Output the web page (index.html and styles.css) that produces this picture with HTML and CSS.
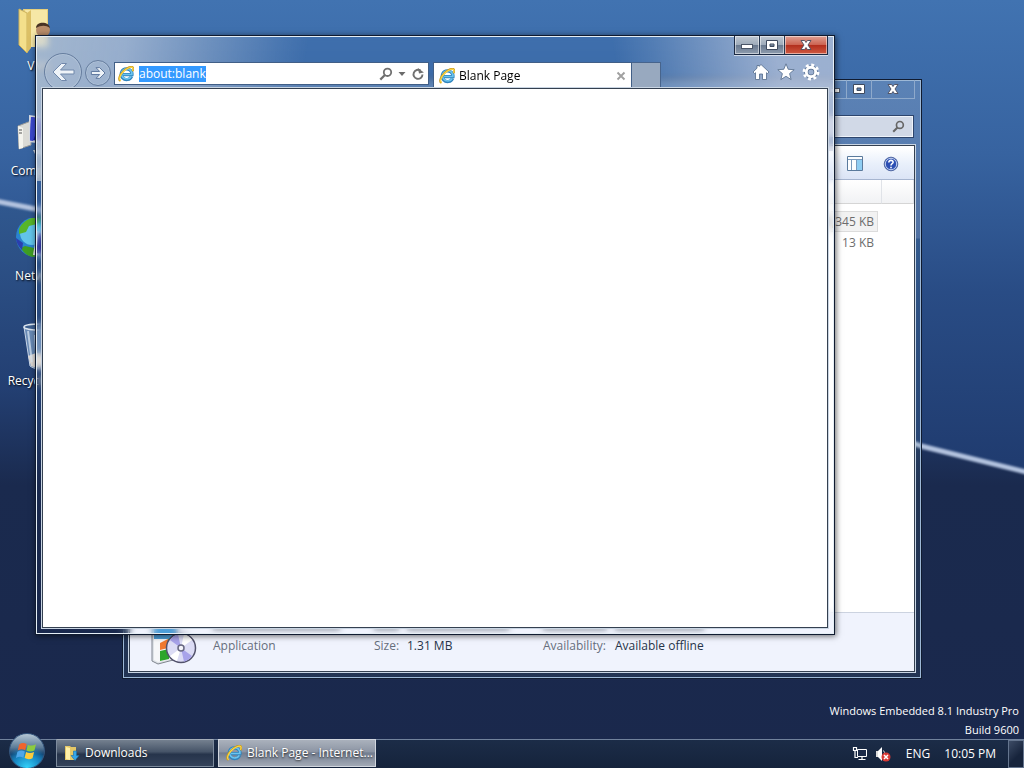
FILE: index.html
```html
<!DOCTYPE html>
<html lang="en">
<head>
<meta charset="utf-8">
<title>Desktop</title>
<link rel="stylesheet" href="styles.css">
</head>
<body>
<svg class="symbols" aria-hidden="true">
  <symbol id="ie" viewBox="0 0 16 16">
    <path d="M13.6 10.3A5.4 5.4 0 1 1 14 8.7H4.6" fill="none" stroke="#2f83bd" stroke-width="3.2"/>
    <path d="M13.3 10.3A5.2 5.2 0 1 1 13.9 8.5H5" fill="none" stroke="#6cc4ee" stroke-width="1.7"/>
    <path d="M2.4 14.9C-.2 13.800 1.500 9 5.300 5.200 9 1.500 13.800-.4 15 1.500c.7 1.100.1 2.600-.6 3.700" fill="none" stroke="#c99a1c" stroke-width="1.900"/>
    <path d="M2.800 14.800C.4 13.800 1.800 9.200 5.500 5.500 9.100 1.900 13.500.2 14.700 1.700c.6.900.3 2.100-.3 3.100" fill="none" stroke="#fad648" stroke-width="1.200"/>
  </symbol>
  <symbol id="flag" viewBox="0 0 20 20">
    <path d="M3.500 4.500C5.500 3 7.500 3 9.700 4.200L8.500 9.300C6.500 8.300 4.600 8.300 2.300 9.500z" fill="#f0642d"/>
    <path d="M10.700 4.700c2.200 1.200 4.400 1 6.800-.3l-1.300 5.200c-2.300 1.200-4.500 1.200-6.700 0z" fill="#8ccb3f"/>
    <path d="M2 10.600c2.200-1.200 4.200-1.200 6.200-.1L7 15.600c-2.200-1.200-4-1-6.200.2z" fill="#4da6e8"/>
    <path d="M9.200 10.900c2.300 1.200 4.500 1 6.700-.1l-1.300 5.200c-2.200 1.200-4.400 1.100-6.600-.1z" fill="#fccb3b"/>
  </symbol>
  <symbol id="lens" viewBox="0 0 14 14">
    <circle cx="8.500" cy="5.300" r="3.700" fill="none" stroke="currentColor" stroke-width="1.800"/>
    <path d="M5.900 8 1.300 12.600" stroke="currentColor" stroke-width="2.200"/>
  </symbol>
  <symbol id="min" viewBox="0 0 14 12"><rect x="1.500" y="5.500" width="11" height="4" fill="#fff" stroke="#4b5668"/></symbol>
  <symbol id="max" viewBox="0 0 14 12"><path d="M1.500 1.500h11v9h-11zM5 5v2.500h4V5z" fill="#fff" fill-rule="evenodd" stroke="#3f4a5e"/></symbol>
  <symbol id="close" viewBox="0 0 14 12"><path d="M2 1.500h3.600L7 3.500l1.400-2H12L9 6l3 4.500H8.400L7 8.500l-1.400 2H2L5 6z" fill="#fff" stroke="#4b4c5c" stroke-width=".9"/></symbol>
</svg>

<div class="screen">
  <svg class="wallpaper" viewBox="0 0 1024 768" preserveAspectRatio="none" aria-hidden="true">
    <defs>
      <linearGradient id="sky" x1="0" y1="0" x2="0" y2="1">
        <stop offset="0" stop-color="#4173b1"/><stop offset=".2" stop-color="#3763a0"/>
        <stop offset=".38" stop-color="#294c85"/><stop offset=".6" stop-color="#203c70"/><stop offset="1" stop-color="#1a284c"/>
      </linearGradient>
      <linearGradient id="ground" x1="0" y1="0" x2="0" y2="1">
        <stop offset="0" stop-color="#30588f"/><stop offset=".33" stop-color="#233f72"/>
        <stop offset=".5" stop-color="#1a2a4e"/><stop offset="1" stop-color="#1a284c"/>
      </linearGradient>
      <filter id="soft"><feGaussianBlur stdDeviation="1"/></filter>
    </defs>
    <rect width="1024" height="768" fill="url(#sky)"/>
    <path d="M0 202Q560 310 921 446L1024 472V768H0z" fill="url(#ground)"/>
    <path d="M-5 201Q560 310 921 446L1030 473" fill="none" stroke="#b3c3df" stroke-width="5" filter="url(#soft)"/>
  </svg>

  <main class="desktop">
    <nav class="shortcuts" aria-label="Desktop icons">
      <a class="shortcut" href="#user">
        <svg viewBox="0 0 48 48" aria-hidden="true">
          <path d="M8 1h25v38H12z" fill="#e6cf7c"/><path d="M10 2h22v37H14z" fill="#f6e7a6"/>
          <path d="M4 1l8 4v40L4 37z" fill="#f4df8b" stroke="#cdb25b"/><path d="M12 5l4-3v38l-4 5z" fill="#dcc066"/>
          <circle cx="28" cy="22" r="7" fill="#b98d6a"/><path d="M21 20c0-7 13-7 14 0-4-3-9-3-14 0z" fill="#493324"/>
        </svg><span>VMs</span></a>
      <a class="shortcut" href="#computer">
        <svg viewBox="0 0 48 48" aria-hidden="true">
          <path d="M3 13l13-5v24L4 36z" fill="#dbdbd6" stroke="#9b9b98"/><path d="M3 13l5 2v20l-4 1z" fill="#f4f4ee"/><path d="M4 17h3M4 20h3" stroke="#555"/>
          <path d="M14 2l29 4v27l-29-4z" fill="#d6dbe4"/><path d="M16 4l25 4v21L15 27z" fill="#1519a3"/><path d="M16 4l10 2-8 22-3-.5z" fill="#3b49d0"/>
          <path d="M18 37h16l4 4H20z" fill="#ccd2dc"/>
        </svg><span>Computer</span></a>
      <a class="shortcut" href="#network">
        <svg viewBox="0 0 48 48" aria-hidden="true">
          <circle cx="21" cy="19" r="20" fill="#2a84cf"/><circle cx="17" cy="15" r="12" fill="#62c4ea"/>
          <path d="M4 11C9 1 18-2 27 0l-5 6-8 2-3 6-7 2z" fill="#57b529"/><path d="M10 28l9 2 4 8-6 1c-6-2-9-5-11-9z" fill="#3f9d22"/><path d="M1 20l7 5-1 7c-4-4-6-8-6-12z" fill="#2b3fae"/>
          <path d="M22 13l24 3v24l-28-3z" fill="#e4e8f0"/><path d="M24 15l18 3v19l-21-2z" fill="#171b86"/>
        </svg><span>Network</span></a>
      <a class="shortcut" href="#recycle">
        <svg viewBox="0 0 48 48" aria-hidden="true">
          <path d="M9 4h32l-6 39c-5 4-15 4-20 0z" fill="#7fa0c8" fill-opacity=".75" stroke="#c7d5e8"/>
          <path d="M13 33l8-3 14 1-2 12c-5 2-12 2-17 0z" fill="#ded9d5"/><path d="M13 8l4 31M20 12l1 16" stroke="#dce8f5" stroke-opacity=".7" stroke-width="2"/>
          <ellipse cx="25" cy="4" rx="16" ry="3" fill="#3d5f8f" stroke="#dce5ef" stroke-width="1.500"/>
        </svg><span>Recycle Bin</span></a>
    </nav>

    <p class="watermark">Windows Embedded 8.1 Industry Pro<br>Build 9600</p>

    <section class="window explorer" aria-label="Downloads">
      <div class="caption">
        <button type="button" aria-label="Minimize"><svg><use href="#min"/></svg></button>
        <button type="button" aria-label="Maximize"><svg><use href="#max"/></svg></button>
        <button type="button" class="close" aria-label="Close"><svg><use href="#close"/></svg></button>
      </div>
      <label class="search"><input type="search" aria-label="Search Downloads"><svg><use href="#lens"/></svg></label>
      <div class="client">
        <div class="commands">
          <button type="button" aria-label="Show the preview pane"><svg viewBox="0 0 16 16"><path d="M.5.500h15v14H.5z" fill="#fdfeff" stroke="#5a7a9c"/><path d="M1 3.500h14M4.500 4v10M9.500 4v10" stroke="#7a9abc"/><path d="M10 4h5v10h-5z" fill="#8fcdf2"/></svg></button>
          <button type="button" aria-label="Help"><svg viewBox="0 0 16 16"><circle cx="8" cy="8" r="6.800" fill="#2c4fb4" stroke="#5369a2"/><circle cx="8" cy="8" r="5.700" fill="none" stroke="#c3d2f0"/><path d="M5.800 6.500c0-3 4.500-2.700 4.300-.2C10 7.800 8 7.700 8 9.500M8 10.700v1.500" fill="none" stroke="#fff" stroke-width="1.600"/></svg></button>
        </div>
        <table class="files">
          <thead><tr><th></th><th></th><th></th></tr></thead>
          <tbody>
            <tr class="selected"><td></td><td>1,345 KB</td><td></td></tr>
            <tr><td></td><td>13 KB</td><td></td></tr>
          </tbody>
        </table>
        <div class="details">
          <svg viewBox="0 0 48 48" aria-hidden="true">
            <path d="M2 4h25v38L8 47l-6-3z" fill="#dfe3e8" stroke="#80858f"/><path d="M4 5h22v17H4z" fill="#4d9ed8"/><path d="M4 22h22v19L8 45l-4-2z" fill="#f6f7f9"/>
            <path d="M10 26l8-4v9l-8 2z" fill="#f07930"/><path d="M10 34l9-2v10l-9 2z" fill="#2da52b"/><path d="M18 22l8-3v10l-8 2z" fill="#58b637"/>
            <circle cx="31" cy="31" r="14.500" fill="#dcdcf5" stroke="#52526b" stroke-width="1.500"/>
            <path d="M31 31L20 23a14 14 0 0 1 8-5.700zM31 31l11 8a14 14 0 0 1-8 5.700z" fill="#a8a3ea"/><path d="M31 31l3-14a14 14 0 0 1 8 6zM31 31l-4 13a14 14 0 0 1-7-5z" fill="#fff"/>
            <circle cx="31" cy="31" r="3" fill="#f4f4fa" stroke="#676780" stroke-width="1.500"/>
          </svg>
          <div class="facts">
            <i></i><i></i><i></i><i></i><i></i>
            <span class="name">Application</span>
            <span class="name">Size:</span><span>1.31 MB</span>
            <span class="name">Availability:</span><span>Available offline</span>
          </div>
        </div>
      </div>
    </section>

    <section class="window browser" aria-label="Blank Page - Internet Explorer">
      <div class="caption">
        <button type="button" aria-label="Minimize"><svg><use href="#min"/></svg></button>
        <button type="button" aria-label="Maximize"><svg><use href="#max"/></svg></button>
        <button type="button" class="close" aria-label="Close"><svg><use href="#close"/></svg></button>
      </div>
      <div class="navbar">
        <button type="button" class="round back" aria-label="Back"><svg viewBox="0 0 24 24"><path d="M23 10v4H9.500l6 6.500h-5L2 12l8.500-8.500h5l-6 6.500z" fill="#eef3f8" stroke="#7188ab"/></svg></button>
        <button type="button" class="round forward" aria-label="Forward"><svg viewBox="0 0 24 24"><path d="M2 9.700v4.600h12.500L9 20h5.500l8-8-8-8H9l5.500 5.700z" fill="#eef3f8" stroke="#60799f" stroke-width="1.500"/></svg></button>
        <div class="address">
          <svg class="ie"><use href="#ie"/></svg>
          <input type="text" id="url" aria-label="Address" value="about:blank" spellcheck="false">
          <button type="button" aria-label="Search"><svg viewBox="0 0 14 14"><use href="#lens"/></svg></button>
          <button type="button" class="drop" aria-label="Show address list"><svg viewBox="0 0 8 4"><path d="M.5 0h7L4 4z" fill="#6b6b6b"/></svg></button>
          <button type="button" aria-label="Refresh"><svg viewBox="0 0 14 14"><path d="M9.500 3.600A4.500 4.500 0 1 0 11.500 7.500" fill="none" stroke="currentColor" stroke-width="1.900"/><path d="M7.500.5v5.800h5z" fill="currentColor" transform="rotate(-12 9 4)"/></svg></button>
        </div>
        <div class="tab">
          <svg class="ie"><use href="#ie"/></svg>
          <span>Blank Page</span>
          <button type="button" aria-label="Close tab"><svg viewBox="0 0 10 10"><path d="M1.500 1.500l7 7M8.500 1.500l-7 7" stroke="#a0a0a0" stroke-width="1.900"/></svg></button>
        </div>
        <button type="button" class="newtab" aria-label="New tab"></button>
        <div class="tools">
          <button type="button" aria-label="Home"><svg viewBox="0 0 18 18"><path d="M9 1.500l8 7.500-1.500 1.500-1-.8V16.500h-4V11h-3v5.500h-4V9.700l-1 .8L1 9l4-3.800V2.500h2v.9z" fill="#fff" stroke="#526989" stroke-width=".8"/></svg></button>
          <button type="button" aria-label="Favorites"><svg viewBox="0 0 18 18"><path d="M9 .8l2.200 5.500 6 .4-4.600 3.900 1.500 5.900L9 13.300l-5.100 3.200 1.500-5.900L.8 6.700l6-.4z" fill="#fff" stroke="#526989" stroke-width=".8"/></svg></button>
          <button type="button" aria-label="Tools"><svg viewBox="0 0 18 18"><circle cx="9" cy="9" r="4.700" fill="none" stroke="#526989" stroke-width="4.200"/><circle cx="9" cy="9" r="7" fill="none" stroke="#fff" stroke-width="2.800" stroke-dasharray="2.900 2.600"/><circle cx="9" cy="9" r="4.700" fill="none" stroke="#fff" stroke-width="2.900"/></svg></button>
        </div>
      </div>
      <div class="client"></div>
    </section>
  </main>

  <footer class="taskbar">
    <button type="button" class="start" aria-label="Start"><svg><use href="#flag"/></svg></button>
    <button type="button" class="task"><svg viewBox="0 0 16 16" aria-hidden="true"><path d="M1 1h5l1 1h5v13H1z" fill="#e4c767"/><path d="M2 2l4 1v12l-4-1z" fill="#fff0a8"/><path d="M9.500 6h3v4.500h2.500L11 15.500 7 10.500h2.500z" fill="#35a5e8" stroke="#1a6ba8" stroke-width=".6"/></svg><span>Downloads</span></button>
    <button type="button" class="task active"><svg aria-hidden="true"><use href="#ie"/></svg><span>Blank Page - Internet...</span></button>
    <div class="tray">
      <button type="button" aria-label="Network"><svg viewBox="0 0 16 16"><path d="M5.500 3.500h9v7h-9z" fill="#1b2a48" stroke="#fff"/><path d="M10 11v2.500M6.500 13.500h7M1.500 1.500h3v3h-3zM3 5v6.500h3" fill="none" stroke="#fff" stroke-width="1.200"/></svg></button>
      <button type="button" aria-label="Volume muted"><svg viewBox="0 0 16 16"><path d="M1 5h2v6H1z" fill="#ddd"/><path d="M3 5l4-4v14l-4-4z" fill="#fff"/><path d="M8.500 4.500q1.500 2 1 4" fill="none" stroke="#ddd"/><circle cx="11" cy="11" r="4.500" fill="#d93a35"/><path d="M9 9l4 4M13 9l-4 4" stroke="#fff" stroke-width="1.500"/></svg></button>
      <button type="button" class="lang">ENG</button>
      <button type="button" class="clock">10:05 PM</button>
      <button type="button" class="peek" aria-label="Show desktop"></button>
    </div>
  </footer>
</div>
<script src="main.js"></script>
</body>
</html>
```
FILE: styles.css
```css
* { box-sizing: border-box; }
body { margin: 0; font: 12px/16px "Open Sans", "Noto Sans", sans-serif; color: #fff; }
button { font: inherit; color: inherit; background: none; border: 0; padding: 0; margin: 0; display: flex; align-items: center; justify-content: center; }
svg { display: block; flex: none; }
.symbols { position: absolute; width: 0; height: 0; }

.screen { position: relative; height: 100vh; display: flex; flex-direction: column; overflow: hidden; }
.wallpaper { position: absolute; inset: 0; width: 100%; height: 100%; }
.desktop { position: relative; flex: 1; min-height: 0; }

/* desktop shortcuts */
.shortcuts { display: flex; flex-direction: column; gap: 31px; padding-top: 8px; width: 78px; }
.shortcut { display: flex; flex-direction: column; align-items: center; gap: 2px; height: 74px; color: #fff; text-decoration: none; text-shadow: 1px 1px 2px #000; white-space: nowrap; }
.shortcut svg { width: 48px; height: 48px; }
.watermark { position: absolute; right: 5px; bottom: 0; margin: 0; font-size: 11px; line-height: 19px; text-align: right; }

/* windows */
.window { position: absolute; display: flex; flex-direction: column; padding: 0 6px 6px; border: 1px solid #101b30; box-shadow: inset 0 0 0 1px #d7e4f2, 1px 1px 6px rgba(0,0,0,.55); }
.client { position: relative; flex: 1; min-height: 0; background: #fff; border: 1px solid #344050; box-shadow: 0 0 0 1px #c9d5e3; }
.caption { display: flex; align-self: flex-end; height: 19px; border: 1px solid #1b2a44; border-top: 0; box-shadow: 0 1px 0 rgba(255,255,255,.6); }
.caption button { width: 25px; border-right: 1px solid #26374f; box-shadow: inset 0 0 0 1px rgba(255,255,255,.5); }
.caption button:last-child { width: 42px; border-right: 0; }
.caption svg { width: 14px; height: 12px; }

.explorer { left: 122px; top: 79px; right: 102px; bottom: 60px; background: linear-gradient(rgba(255,255,255,.16), rgba(255,255,255,.16) 158px, rgba(90,130,130,.12) 159px); box-shadow: inset 0 0 0 1px #9db8d6; }
.explorer .caption { border-color: #8ea9cb; box-shadow: none; }
.explorer .caption button { border-color: #8ea9cb; box-shadow: none; }
.explorer .client { display: flex; flex-direction: column; margin-top: 7px; padding-top: 2px; color: #6d6d6d; }
.search { display: flex; align-items: center; align-self: flex-end; width: 220px; height: 23px; margin-top: 16px; margin-right: 1px; padding-right: 8px; background: #d1d9e7; border: 1px solid #2d456d; box-shadow: inset 0 0 0 1px #eef3fa; color: #666; }
.search input { flex: 1; min-width: 0; border: 0; background: none; }
.search svg { width: 13px; height: 13px; }
.commands { display: flex; justify-content: flex-end; align-items: center; gap: 20px; height: 32px; padding-right: 15px; background: linear-gradient(#fff, #e9f0fb 50%, #dbe4f6); border-bottom: 1px solid #a6b5d0; }
.commands svg { width: 16px; height: 16px; }
.files { width: 100%; border-spacing: 0; table-layout: fixed; }
.files th { height: 24px; padding: 0; background: linear-gradient(#fff, #f1f2f4); border-bottom: 1px solid #d5d5d5; border-right: 1px solid #e0e3e8; }
.files th:nth-child(2) { width: 90px; }
.files th:nth-child(3) { width: 32px; }
.files td { height: 21px; padding: 0 4px 0 0; border-right: 4px solid transparent; background-clip: padding-box; text-align: right; }
.files tbody::before { content: ""; display: table-row; height: 7px; }
.files .selected td:nth-child(2) { background-color: #f2f2f2; box-shadow: inset 0 0 0 1px #dcdcdc; }
.details { display: flex; gap: 15px; height: 59px; margin-top: auto; padding: 4px 20px; background: #f0f3fd; border-top: 1px solid #ccd3e0; color: #273449; }
.details > svg { width: 48px; height: 48px; }
.facts { display: grid; grid-template-columns: 161px 33px 136px 72px auto; grid-template-rows: 14px 16px; align-content: start; row-gap: 7px; white-space: nowrap; }
.facts i { height: 8px; margin: 6px 34px 0 0; background: #a9afba; }
.facts i:nth-child(2), .facts i:nth-child(4) { margin-right: 8px; }
.facts i:nth-child(5) { margin-right: 0; }
.facts .name { color: #666e7c; }

.browser { left: 35px; top: 35px; right: 189px; bottom: 104px; backdrop-filter: blur(3px); background: linear-gradient(100deg, rgba(205,213,220,.7) 0, rgba(205,213,226,.62) 90px, rgba(190,205,225,.1) 240px, transparent 270px) no-repeat 0 0 / 100% 145px, linear-gradient(260deg, rgba(205,211,228,.66) 60px, rgba(190,205,225,.16) 180px, transparent 220px) no-repeat 0 0 / 100% 115px; box-shadow: inset 0 0 0 1px #e5eef5, 1px 1px 6px rgba(0,0,0,.6); }
.browser .caption { background: linear-gradient(#bec7d2, #9daab9 50%, #68788e 51%, #8f9daf); }
.browser .caption .close { background: linear-gradient(#dfa093, #cc6250 50%, #b22e1d 51%, #cf5941); }
.navbar { display: flex; height: 26px; margin-top: 7px; }
.round { flex: none; border: 1px solid #667d9e; border-radius: 50%; background: rgba(180,195,215,.25); box-shadow: inset 0 0 0 1px rgba(220,230,240,.25); }
.back { width: 38px; height: 38px; margin: -9px 3px 0 2px; }
.back svg { width: 24px; height: 24px; }
.forward { width: 26px; height: 26px; margin: -2px 3px 0 0; }
.forward svg { width: 16px; height: 16px; }
.address { flex: 1; min-width: 0; height: 23px; display: flex; align-items: center; gap: 2px; padding: 0 3px; background: #fff; border: 1px solid #415f87; color: #707070; }
.ie { width: 16px; height: 16px; }
.address input { flex: 1; min-width: 0; height: 16px; margin-left: 3px; padding: 0; border: 0; outline: 0; background: none; font: inherit; color: #000; }
.address input::selection { background: #3399ff; color: #fff; }
.address button svg { width: 14px; height: 14px; }
.address .drop { width: 14px; }
.address .drop svg { width: 8px; height: 4px; }
.tab { flex: 0 1 199px; min-width: 0; display: flex; align-items: center; gap: 4px; margin-left: 4px; padding: 0 5px; background: #fff; border: 1px solid #415f87; border-bottom: 0; color: #000; }
.tab span { flex: 1; white-space: nowrap; }
.tab svg { margin-top: 1px; }
.tab button svg { width: 10px; height: 10px; }
.newtab { flex: none; width: 29px; background: #98a9bf; border: 1px solid #47648c; border-left: 0; border-bottom: 0; }
.tools { display: flex; flex: 0 0 167px; justify-content: flex-end; align-items: flex-start; gap: 7px; padding-right: 8px; margin-top: 1px; }
.tools svg { width: 18px; height: 18px; }

/* taskbar */
.taskbar { position: relative; display: flex; align-items: stretch; height: 29px; padding-left: 9px; background: linear-gradient(rgba(28,45,70,.8), rgba(20,34,56,.8)); border-top: 1px solid #71829c; }
.start { width: 36px; height: 36px; margin: -7px 11px 0 0; border-radius: 50%; border: 1px solid #35577f; background: radial-gradient(circle at 50% 100%, #35d4fb 0, #1888c4 35%, transparent 60%), linear-gradient(#b5c6d4, #5b7b98 40%, #123c68 60%, #1c79b0); }
.start svg { width: 24px; height: 24px; }
.task { width: 158px; height: 28px; margin: -1px 4px 0 0; justify-content: flex-start; gap: 5px; padding: 0 7px; border: 1px solid #7d8b9d; border-top-color: #a4adb8; background: linear-gradient(#74808f, #465468 45%, #26344b 55%, #34425a); text-shadow: 0 1px 2px #222; white-space: nowrap; }
.task svg { width: 16px; height: 16px; }
.task.active { background: linear-gradient(#aab1bc, #8c95a4 45%, #737e90 50%, #a2a9b5); border-color: #d1d6de; padding-right: 0; }
.tray { display: flex; margin-left: auto; align-items: center; }
.tray svg { width: 16px; height: 16px; margin-right: 7px; }
.lang { margin: 0 14px 0 8px; }
.clock { margin-right: 12px; }
.peek { width: 16px; height: 28px; border: 1px solid #65758e; background: linear-gradient(135deg, #3d4c66, #17243c 60%); }
```
FILE: main.js
```js
const url = document.getElementById("url");
url.focus();
url.select();
```
